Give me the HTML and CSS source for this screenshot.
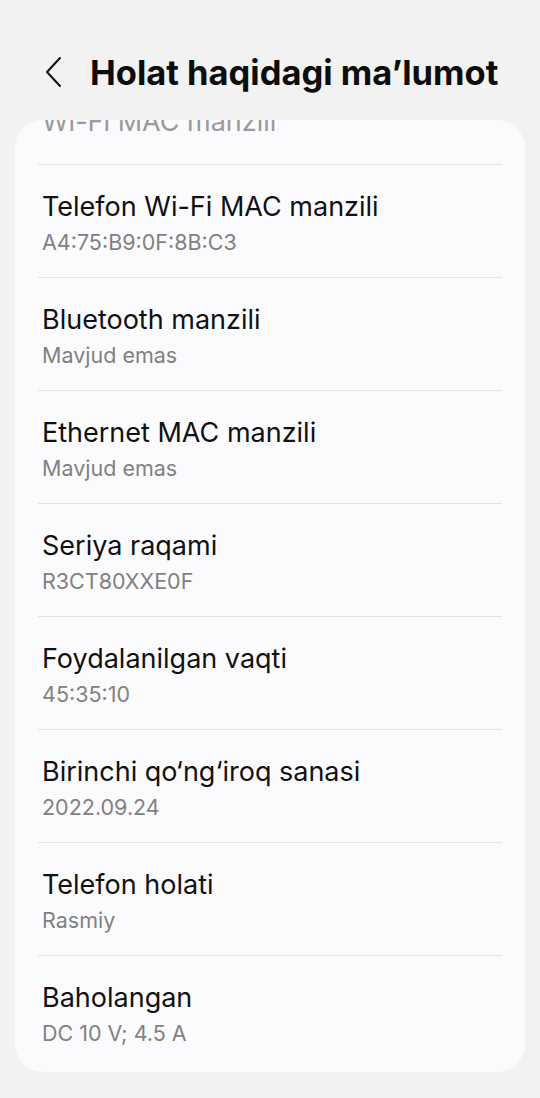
FILE: index.html
```html
<!DOCTYPE html>
<html lang="uz">
<head>
  <meta charset="UTF-8" />
  <meta name="viewport" content="width=device-width, initial-scale=1.0"/>
  <title>Holat haqidagi ma'lumot</title>
  <link rel="stylesheet" href="styles.css">
</head>
<body>

  <!-- Top bar -->
  <div class="top-bar">
    <button class="back-btn" aria-label="Orqaga">
      <svg width="20" height="32" viewBox="0 0 20 32">
        <path d="M16 2 L3 16 L16 30" fill="none" stroke="#111" stroke-width="2" stroke-linecap="round" stroke-linejoin="round"/>
      </svg>
    </button>
    <h1>Holat haqidagi ma’lumot</h1>
  </div>

  <!-- Info list (scrolled a bit) -->
  <div class="info-card">
    <div class="item faded">
      <div class="title">Wi-Fi MAC manzili</div>
    </div>
    <div class="item">
      <div class="title">Telefon Wi-Fi MAC manzili</div>
      <div class="value">A4:75:B9:0F:8B:C3</div>
    </div>
    <div class="item">
      <div class="title">Bluetooth manzili</div>
      <div class="value">Mavjud emas</div>
    </div>
    <div class="item">
      <div class="title">Ethernet MAC manzili</div>
      <div class="value">Mavjud emas</div>
    </div>
    <div class="item">
      <div class="title">Seriya raqami</div>
      <div class="value">R3CT80XXE0F</div>
    </div>
    <div class="item">
      <div class="title">Foydalanilgan vaqti</div>
      <div class="value">45:35:10</div>
    </div>
    <div class="item">
      <div class="title">Birinchi qo‘ng‘iroq sanasi</div>
      <div class="value">2022.09.24</div>
    </div>
    <div class="item">
      <div class="title">Telefon holati</div>
      <div class="value">Rasmiy</div>
    </div>
    <div class="item">
      <div class="title">Baholangan</div>
      <div class="value">DC 10 V; 4.5 A</div>
    </div>
  </div>

</body>
</html>
```

FILE: styles.css
```css
* {
  margin: 0;
  padding: 0;
  box-sizing: border-box;
}

body {
  background: #f2f2f2;
  font-family: Inter, Roboto, "Noto Sans", sans-serif;
  color: #111;
  height: 1098px;
  overflow: hidden;
}

.top-bar {
  display: flex;
  align-items: center;
  height: 120px;
  padding: 24px 0 0 44px;
}

.back-btn {
  background: none;
  border: none;
  width: 46px;
  height: 40px;
  display: flex;
  align-items: center;
}

h1 {
  font-size: 34.5px;
  font-weight: 700;
  color: #0d0d0d;
  letter-spacing: 0;
}

.info-card {
  margin: 0 15px;
  background: #fbfbfd;
  border-radius: 28px;
  overflow: hidden;
  padding: 0 23px 4px;
}

.item {
  padding: 24px 4px 20px;
  border-top: 1px solid #e4e4e6;
}

.item.faded {
  border-top: none;
  height: 44px;
  padding: 0 4px 24px;
  display: flex;
  align-items: flex-end;
}

.item.faded .title {
  color: #9a9a9a;
}

.title {
  font-size: 27px;
  line-height: 36px;
  color: #111;
}

.value {
  font-size: 21.5px;
  line-height: 30px;
  margin-top: 2px;
  color: #818181;
}
```
